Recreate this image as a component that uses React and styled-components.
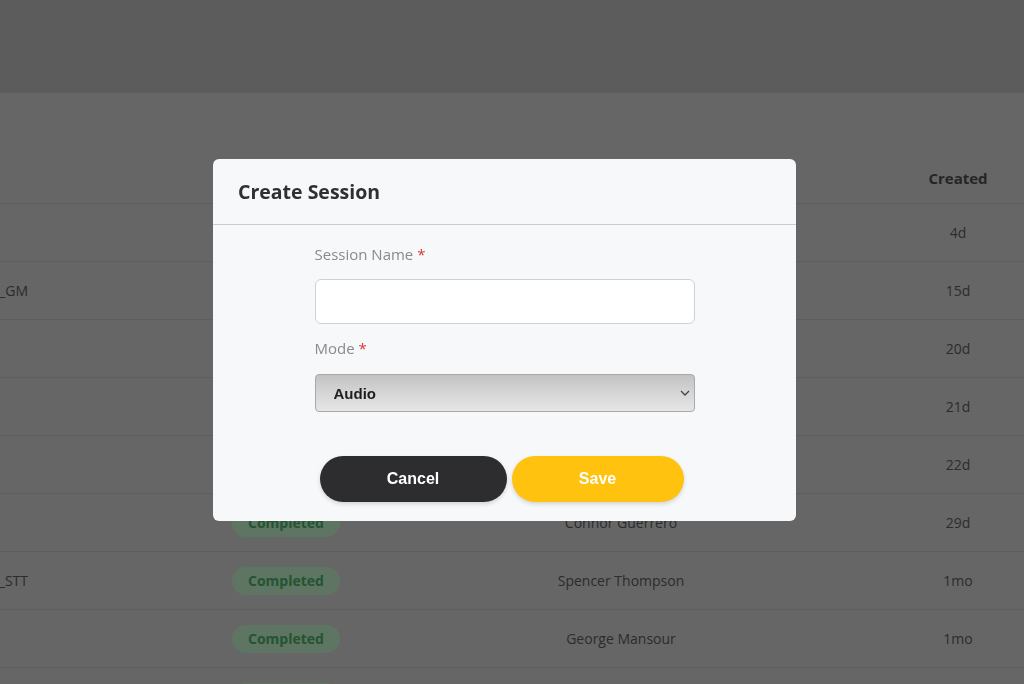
import React, { useState } from "react";
import styled, { createGlobalStyle } from "styled-components";

const GlobalStyle = createGlobalStyle`
  html, body {
    margin: 0;
    padding: 0;
    width: 100%;
    height: 100%;
    overflow: hidden;
    background: #cccccc;
    font-family: "Open Sans", "Liberation Sans", sans-serif;
  }
  * {
    box-sizing: border-box;
  }
`;

const StyledPage = styled.div`
  width: 100vw;
  height: 100vh;
  display: flex;
  flex-direction: column;
  overflow: hidden;
  background: #cccccc;
`;

const StyledTopBar = styled.div`
  height: 93px;
  flex-shrink: 0;
  background: #b8b8b8;
`;

const StyledToolbar = styled.div`
  height: 60px;
  flex-shrink: 0;
`;

const StyledRow = styled.div`
  display: grid;
  grid-template-columns: 28px 180px 156px 514px 14px 1fr;
  height: ${(props) => (props.$head ? "51px" : "58px")};
  flex-shrink: 0;
  align-items: center;
  border-bottom: 1px solid #bcbcbc;
  color: ${(props) => (props.$head ? "#4a4a4a" : "#585858")};
  font-weight: ${(props) => (props.$head ? 700 : 400)};
  font-size: ${(props) => (props.$head ? "15px" : "14px")};
`;

const StyledNameCell = styled.div`
  display: flex;
  justify-content: flex-end;
  white-space: nowrap;
`;

const StyledCell = styled.div`
  text-align: center;
  white-space: nowrap;
  grid-column: ${(props) => props.$col};
`;

const StyledBadge = styled.span`
  display: inline-block;
  padding: 4px 16px;
  border-radius: 14px;
  background: #bceac6;
  color: #48a862;
  font-weight: 700;
  font-size: 14px;
  line-height: 20px;
`;

const StyledOverlay = styled.div`
  position: fixed;
  inset: 0;
  background: rgba(0, 0, 0, 0.5);
  display: flex;
  justify-content: center;
  align-items: center;
  padding-right: 15px;
  padding-bottom: 4px;
`;

const StyledModal = styled.div`
  width: 583px;
  height: 362px;
  background: #f7f8fa;
  border-radius: 6px;
  display: flex;
  flex-direction: column;
  overflow: hidden;
`;

const StyledModalHeader = styled.div`
  height: 66px;
  flex-shrink: 0;
  display: flex;
  align-items: center;
  padding: 0 25px;
  border-bottom: 1px solid #c9ccd1;
  font-size: 19.5px;
  font-weight: 700;
  color: #2f3033;
`;

const StyledForm = styled.div`
  width: 380px;
  margin: 0 auto;
  padding-top: 18px;
  display: flex;
  flex-direction: column;
`;

const StyledLabel = styled.label`
  font-size: 15px;
  color: #8a8a8a;
  line-height: 22px;
  margin-bottom: ${(props) => props.$gap};

  span {
    color: #d9363e;
  }
`;

const StyledInput = styled.input`
  width: 100%;
  height: 45px;
  border: 1px solid #cfd1d4;
  border-radius: 6px;
  background: #ffffff;
  outline: none;
  padding: 0 12px;
  font-size: 15px;
  margin-bottom: 13px;
`;

const StyledSelectWrap = styled.div`
  position: relative;
  width: 100%;
  height: 38px;
`;

const StyledSelect = styled.select`
  width: 100%;
  height: 100%;
  appearance: none;
  border: 1px solid #a9a9a9;
  border-radius: 4px;
  background: linear-gradient(to bottom, #c2c2c2 0%, #d4d4d4 45%, #e6e6e6 100%);
  font-family: "Liberation Sans", Arial, sans-serif;
  font-weight: 700;
  font-size: 15px;
  color: #1e1e1e;
  padding: 0 18px;
  outline: none;
`;

const StyledChevron = styled.svg`
  position: absolute;
  right: 4px;
  top: 14px;
  pointer-events: none;
`;

const StyledButtons = styled.div`
  display: flex;
  justify-content: center;
  gap: 5px;
  margin-top: 44px;
  padding-right: 6px;
`;

const StyledButton = styled.button`
  width: ${(props) => props.$width};
  height: 46px;
  border: none;
  border-radius: 23px;
  background: ${(props) => props.$bg};
  color: #ffffff;
  font-family: "Liberation Sans", Arial, sans-serif;
  font-weight: 700;
  font-size: 16px;
  box-shadow: 0 2px 4px rgba(0, 0, 0, 0.15);
  cursor: pointer;
`;

const rows = [
  { name: "", status: "Completed", owner: "", created: "4d" },
  { name: "Demo_Session_GM", status: "Completed", owner: "", created: "15d" },
  { name: "", status: "Completed", owner: "", created: "20d" },
  { name: "", status: "Completed", owner: "", created: "21d" },
  { name: "", status: "Completed", owner: "", created: "22d" },
  { name: "", status: "Completed", owner: "Connor Guerrero", created: "29d" },
  { name: "Interview_STT", status: "Completed", owner: "Spencer Thompson", created: "1mo" },
  { name: "", status: "Completed", owner: "George Mansour", created: "1mo" },
  { name: "", status: "Completed", owner: "Nina Patel", created: "1mo" },
];

const App = () => {
  const [sessionName, setSessionName] = useState("");
  const [mode, setMode] = useState("audio");

  return (
    <>
      <GlobalStyle />
      <StyledPage>
        <StyledTopBar />
        <StyledToolbar />
        <StyledRow $head>
          <StyledNameCell />
          <StyledCell $col={3}>Status</StyledCell>
          <StyledCell $col={4}>Owner</StyledCell>
          <StyledCell $col={6}>Created</StyledCell>
        </StyledRow>
        {rows.map((row, i) => (
          <StyledRow key={i}>
            <StyledNameCell>{row.name}</StyledNameCell>
            <StyledCell $col={3}>
              <StyledBadge>{row.status}</StyledBadge>
            </StyledCell>
            <StyledCell $col={4}>{row.owner}</StyledCell>
            <StyledCell $col={6}>{row.created}</StyledCell>
          </StyledRow>
        ))}
      </StyledPage>

      <StyledOverlay>
        <StyledModal>
          <StyledModalHeader>Create Session</StyledModalHeader>
          <StyledForm>
            <StyledLabel $gap="14px">
              Session Name <span>*</span>
            </StyledLabel>
            <StyledInput
              type="text"
              value={sessionName}
              onChange={(event) => setSessionName(event.target.value)}
            />
            <StyledLabel $gap="15px">
              Mode <span>*</span>
            </StyledLabel>
            <StyledSelectWrap>
              <StyledSelect
                value={mode}
                onChange={(event) => setMode(event.target.value)}
              >
                <option value="audio">Audio</option>
                <option value="video">Video</option>
              </StyledSelect>
              <StyledChevron width="12" height="10" viewBox="0 0 12 10">
                <path
                  d="M2 3 L6 7 L10 3"
                  fill="none"
                  stroke="#444"
                  strokeWidth="1.3"
                />
              </StyledChevron>
            </StyledSelectWrap>
          </StyledForm>
          <StyledButtons>
            <StyledButton $width="187px" $bg="#2d2d2f">
              Cancel
            </StyledButton>
            <StyledButton $width="172px" $bg="#ffc20e">
              Save
            </StyledButton>
          </StyledButtons>
        </StyledModal>
      </StyledOverlay>
    </>
  );
};

export default App;
